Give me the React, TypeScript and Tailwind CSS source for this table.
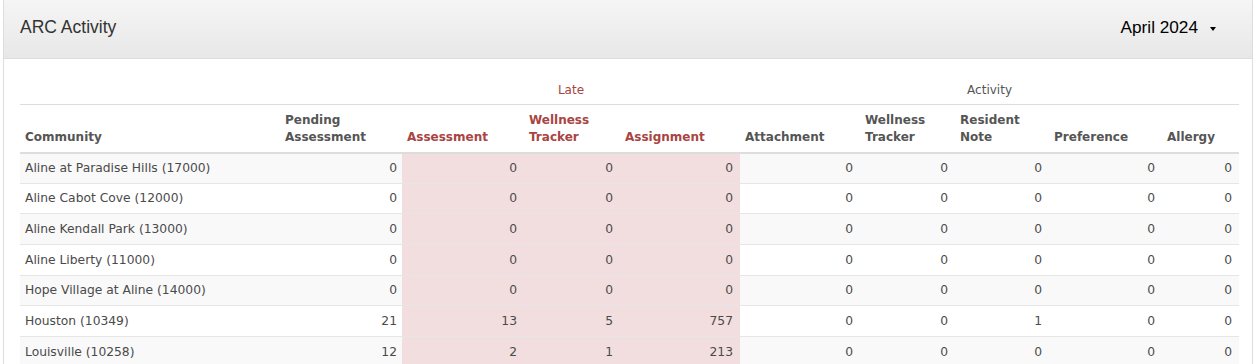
import React from "react";

type Row = { name: string; v: number[] };

const rows: Row[] = [
  { name: "Aline at Paradise Hills (17000)", v: [0, 0, 0, 0, 0, 0, 0, 0, 0] },
  { name: "Aline Cabot Cove (12000)", v: [0, 0, 0, 0, 0, 0, 0, 0, 0] },
  { name: "Aline Kendall Park (13000)", v: [0, 0, 0, 0, 0, 0, 0, 0, 0] },
  { name: "Aline Liberty (11000)", v: [0, 0, 0, 0, 0, 0, 0, 0, 0] },
  { name: "Hope Village at Aline (14000)", v: [0, 0, 0, 0, 0, 0, 0, 0, 0] },
  { name: "Houston (10349)", v: [21, 13, 5, 757, 0, 0, 1, 0, 0] },
  { name: "Louisville (10258)", v: [12, 2, 1, 213, 0, 0, 0, 0, 0] },
];

const widths = [260, 122, 122, 96, 120, 120, 95, 94, 113, 77];

const headers: { lines: string[]; late?: boolean }[] = [
  { lines: ["Pending", "Assessment"] },
  { lines: ["Assessment"], late: true },
  { lines: ["Wellness", "Tracker"], late: true },
  { lines: ["Assignment"], late: true },
  { lines: ["Attachment"] },
  { lines: ["Wellness", "Tracker"] },
  { lines: ["Resident", "Note"] },
  { lines: ["Preference"] },
  { lines: ["Allergy"] },
];

export default function App() {
  return (
    <div className="w-[1256px] h-[364px] bg-white overflow-hidden">
      <div className="mx-[3px] border-x border-[#dddddd] h-full bg-white">
        <div className="h-[59px] border-b border-[#dddddd] bg-gradient-to-b from-[#f5f5f5] to-[#e8e8e8] flex items-center justify-between pl-[16px] pr-[36px] pb-[4px]">
          <div
            className="text-[17.5px] text-[#333333]"
            style={{ fontFamily: '"Liberation Sans", Arial, sans-serif' }}
          >
            ARC Activity
          </div>
          <div
            className="flex items-center gap-[12px] text-[17.2px] text-black pt-[2px]"
            style={{ fontFamily: '"Liberation Sans", Arial, sans-serif' }}
          >
            <span>April 2024</span>
            <span className="w-0 h-0 border-l-[3.5px] border-r-[3.5px] border-t-[4px] border-l-transparent border-r-transparent border-t-black mt-[2px]" />
          </div>
        </div>
        <div
          className="pl-[16px] pt-[15px]"
          style={{ fontFamily: '"DejaVu Sans", Verdana, sans-serif' }}
        >
          <table className="table-fixed border-collapse w-[1219px] text-[12.3px] text-[#4a4a4a]">
            <colgroup>
              {widths.map((w, i) => (
                <col key={i} style={{ width: w }} />
              ))}
            </colgroup>
            <thead>
              <tr className="h-[30px] border-b border-[#dddddd]">
                <th colSpan={2} />
                <th colSpan={3} className="font-normal text-[12px] text-[#a94442] text-center align-middle pt-[2px]">
                  Late
                </th>
                <th colSpan={5} className="font-normal text-[12px] text-[#555555] text-center align-middle pt-[2px]">
                  Activity
                </th>
              </tr>
              <tr className="border-b-2 border-[#dddddd]">
                <th className="text-left align-bottom pl-[5px] pb-[6px] pt-[7px] leading-[17px] font-bold text-[12px] text-[#555555]">
                  Community
                </th>
                {headers.map((h, i) => (
                  <th
                    key={i}
                    className={`text-left align-bottom pl-[5px] pb-[6px] pt-[7px] leading-[17px] font-bold text-[12px] ${
                      h.late ? "text-[#a94442]" : "text-[#555555]"
                    }`}
                  >
                    {h.lines.map((l, j) => (
                      <div key={j}>{l}</div>
                    ))}
                  </th>
                ))}
              </tr>
            </thead>
            <tbody>
              {rows.map((r, ri) => (
                <tr
                  key={ri}
                  className={`h-[30.7px] border-t border-[#e6e6e6] ${ri % 2 === 0 ? "bg-[#f9f9f9]" : "bg-white"}`}
                >
                  <td className="pl-[5px] text-left">{r.name}</td>
                  {r.v.map((v, vi) => (
                    <td
                      key={vi}
                      className={`text-right ${vi === 0 ? "pr-[5px]" : "pr-[7px]"} ${
                        vi >= 1 && vi <= 3 ? "bg-[#f2dede]" : ""
                      }`}
                    >
                      {v}
                    </td>
                  ))}
                </tr>
              ))}
            </tbody>
          </table>
        </div>
      </div>
    </div>
  );
}
